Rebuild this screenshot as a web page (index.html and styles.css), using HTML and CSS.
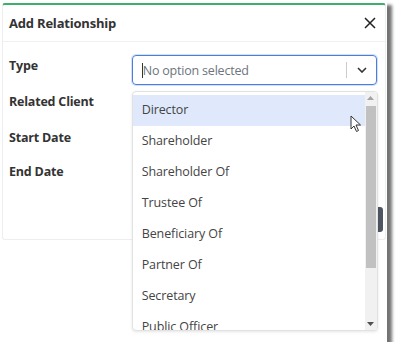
FILE: index.html
```html
<!DOCTYPE html>
<html>
<head>
    <meta charset="UTF-8">
    <meta name="viewport" content="width=device-width, initial-scale=1.0">
    <title>Add Relationship</title>
    <link rel="stylesheet" href="styles.css">
</head>
<body>
    <div class="shot">
        <div class="modal">
            <div class="modal-header">
                <h2>Add Relationship</h2>
                <button type="button" class="close" aria-label="Close">
                    <svg width="12" height="12" viewBox="0 0 12 12"><path d="M1 1L11 11M11 1L1 11" stroke="#222" stroke-width="1.5" fill="none"/></svg>
                </button>
            </div>
            <div class="modal-body">
                <div class="form-row">
                    <label>Type</label>
                    <div class="select-wrap">
                        <div class="select">
                            <span class="caret"></span>
                            <span class="placeholder">No option selected</span>
                            <span class="divider"></span>
                            <svg class="chevron" width="10" height="6" viewBox="0 0 10 6"><path d="M1 1L5 5L9 1" stroke="#333" stroke-width="1.6" fill="none"/></svg>
                        </div>
                        <div class="dropdown">
                            <ul class="options">
                                <li class="active">Director</li>
                                <li>Shareholder</li>
                                <li>Shareholder Of</li>
                                <li>Trustee Of</li>
                                <li>Beneficiary Of</li>
                                <li>Partner Of</li>
                                <li>Secretary</li>
                                <li>Public Officer</li>
                            </ul>
                            <div class="scrollbar">
                                <svg class="arrow" width="7" height="4" viewBox="0 0 7 4"><path d="M0 4L3.5 0L7 4Z" fill="#a3a3a3"/></svg>
                                <div class="track"><div class="thumb"></div></div>
                                <svg class="arrow" width="7" height="4" viewBox="0 0 7 4"><path d="M0 0L3.5 4L7 0Z" fill="#505050"/></svg>
                            </div>
                            <svg class="pointer" width="12" height="18" viewBox="0 0 12 18"><path d="M1 1L1 14L4 11L6.5 16.5L8.5 15.5L6 10L10.5 10Z" fill="#fff" stroke="#333" stroke-width="1"/></svg>
                        </div>
                    </div>
                </div>
                <div class="form-row"><label>Related Client</label></div>
                <div class="form-row short"><label>Start Date</label></div>
                <div class="form-row"><label>End Date</label></div>
                <div class="modal-footer">
                    <button type="button" class="save">Save</button>
                </div>
            </div>
        </div>
    </div>
</body>
</html>
```

FILE: styles.css
```css
body { margin: 0; background: #fff; font-family: "Open Sans", "Noto Sans", sans-serif; color: #333; }
.shot { width: 387px; height: 342px; background: #fff; box-shadow: 5px 5px 3px rgba(0,0,0,0.55); }
.modal { position: relative; top: 3px; margin-left: 2px; width: 382px; height: 234px; border: 1px solid #eceeef; border-top: 2px solid #3dae6b; border-radius: 3px; background: #fff; }
.modal-header { display: flex; align-items: center; justify-content: space-between; height: 36px; padding: 0 9px 0 6px; border-bottom: 1px solid #eef0f2; }
.modal-header h2 { margin: 0; font-size: 13px; font-weight: 700; color: #333; letter-spacing: -0.2px; }
.close { background: none; border: none; padding: 0; display: flex; }
.modal-body { padding: 13px 8px 0 6px; }
.form-row { display: flex; height: 36px; }
.form-row.short { height: 34px; }
.form-row label { width: 123px; padding-top: 2px; font-size: 12.5px; font-weight: 700; color: #333; letter-spacing: -0.2px; }
.select-wrap { position: relative; width: 246px; }
.select { display: flex; align-items: center; height: 28px; border: 1px solid #4a7fe0; border-radius: 4px; box-shadow: 0 0 0 1px rgba(74,127,224,0.25); }
.caret { width: 1px; height: 15px; background: #333; margin-left: 9px; }
.placeholder { flex: 1; font-size: 12.5px; color: #6c757d; letter-spacing: -0.2px; }
.divider { width: 1px; height: 16px; background: #ccc; }
.chevron { margin: 0 9px 0 10px; }
.dropdown { position: absolute; top: 36px; left: 0; width: 244px; height: 238px; display: flex; border: 1px solid #e2e2e2; border-radius: 4px; background: #fff; box-shadow: 0 1px 3px rgba(0,0,0,0.1); overflow: hidden; z-index: 2; }
.options { flex: 1; list-style: none; margin: 0; padding: 3px 0 0 0; }
.options li { height: 31px; line-height: 30px; padding-left: 9px; font-size: 12.5px; color: #444; letter-spacing: -0.1px; }
.options li.active { background: #dfe9fb; }
.scrollbar { width: 12px; display: flex; flex-direction: column; align-items: center; background: #f1f1f1; }
.arrow { margin: 4px 0; flex: none; }
.track { flex: 1; width: 100%; }
.thumb { margin: 2px 1px 0; height: 162px; background: #c1c1c1; }
.pointer { position: absolute; left: 217px; top: 23px; }
.modal-footer { display: flex; justify-content: flex-end; padding-top: 10px; }
.save { width: 60px; height: 25px; margin-right: -6px; border: none; border-radius: 3px; background: #4f5663; color: #fff; font-size: 12px; }
```
